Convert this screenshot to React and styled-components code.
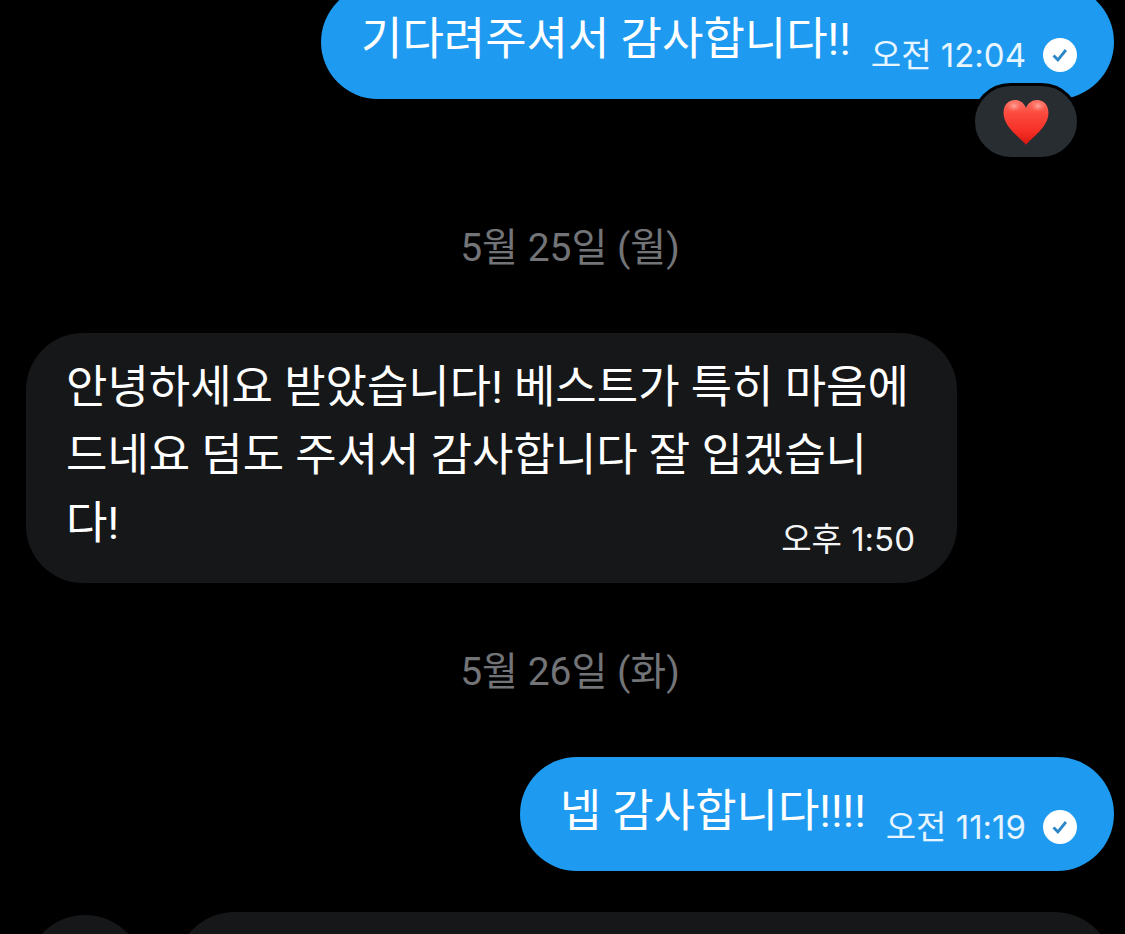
import React from 'react';
import styled, { createGlobalStyle } from 'styled-components';

const GlobalStyle = createGlobalStyle`
  * {
    box-sizing: border-box;
  }

  body {
    margin: 0;
    background: #000;
    font-family: Roboto, "Noto Sans CJK KR", sans-serif;
  }
`;

const Screen = styled.main`
  height: 100vh;
  overflow: hidden;
  padding: 0 11px 0 26px;
`;

// the thread is scrolled, so the first message is cut off at the top
const Thread = styled.div`
  display: flex;
  flex-direction: column;
  margin-top: -15px;
`;

const Message = styled.div`
  position: relative;
  align-self: ${({ $sent }) => ($sent ? 'flex-end' : 'flex-start')};
  max-width: 931px;
  margin-bottom: ${({ $reacted }) => ($reacted ? '60px' : '0')};
`;

const Bubble = styled.div`
  display: flow-root;
  padding: 21px ${({ $sent }) => ($sent ? '37px' : '42px')} 10px 40px;
  border-radius: 57px;
  background: ${({ $sent }) => ($sent ? '#1e9bf0' : '#161719')};
  color: #fff;
  font-size: 45px;
  line-height: 68px;
`;

const Meta = styled.span`
  float: right;
  display: flex;
  align-items: center;
  gap: 17px;
  margin: 15px 0 0 20px;
  font-family: Inter, "Noto Sans CJK KR", sans-serif;
  font-size: 33px;
  color: ${({ $sent }) => ($sent ? '#e6f5ff' : '#f4f5f6')};
`;

const Reaction = styled.button`
  position: absolute;
  right: 34px;
  top: 98px;
  display: flex;
  align-items: center;
  justify-content: center;
  width: 108px;
  height: 77px;
  padding: 0;
  border: 3px solid #000;
  border-radius: 39px;
  background: #272d30;
`;

const DateLabel = styled.time`
  margin: 59px 0 55px;
  text-align: center;
  font-size: 39px;
  line-height: 60px;
  color: #727477;
`;

const Composer = styled.form`
  display: flex;
  align-items: flex-end;
  gap: 31px;
  margin-top: 41px;
`;

const AddButton = styled.button`
  flex: none;
  width: 118px;
  height: 118px;
  border: 0;
  border-radius: 50%;
  background: #161719;
`;

const MessageInput = styled.input`
  flex: 1;
  min-width: 0;
  height: 121px;
  padding: 0 39px;
  border: 0;
  border-radius: 60px;
  background: #161719;
  color: #fff;
  font-size: 45px;
`;

const SentIcon = () => (
  <svg width="34" height="34" viewBox="0 0 34 34" aria-hidden="true">
    <circle cx="17" cy="17" r="17" fill="#fff" />
    <path d="M10.5 17.4l4.4 4.4 8-9.8" fill="none" stroke="#2b86c8" strokeWidth="2.8" />
  </svg>
);

const HeartIcon = () => (
  <svg width="46" height="47" viewBox="0 0 46 47" aria-hidden="true">
    <defs>
      <linearGradient id="heart" x1="0" y1="0" x2="0" y2="1">
        <stop offset="0" stopColor="#ff7466" />
        <stop offset="0.3" stopColor="#fb4a3e" />
        <stop offset="0.7" stopColor="#f62f26" />
        <stop offset="1" stopColor="#d8170f" />
      </linearGradient>
      <radialGradient id="shine">
        <stop offset="0" stopColor="#ffb3a8" stopOpacity="0.9" />
        <stop offset="1" stopColor="#ff7466" stopOpacity="0" />
      </radialGradient>
    </defs>
    <path
      d="M23 47C20 42 4 32 1 19C-1 9 4 2 12 2C17 2 21 5 23 10C25 5 29 2 34 2C42 2 47 9 45 19C42 32 26 42 23 47Z"
      fill="url(#heart)"
    />
    <ellipse cx="11" cy="8" rx="8" ry="6" fill="url(#shine)" />
    <ellipse cx="35" cy="8" rx="8" ry="6" fill="url(#shine)" />
  </svg>
);

const ChatMessage = ({ text, time, sent, reacted }) => (
  <Message $sent={sent} $reacted={reacted}>
    <Bubble $sent={sent}>
      {text}
      <Meta $sent={sent}>
        {time}
        {sent && <SentIcon />}
      </Meta>
    </Bubble>
    {reacted && (
      <Reaction type="button" aria-label="하트">
        <HeartIcon />
      </Reaction>
    )}
  </Message>
);

const App = () => {
  return (
    <>
      <GlobalStyle />
      <Screen>
        <Thread>
          <ChatMessage text="기다려주셔서 감사합니다!!" time="오전 12:04" sent reacted />
          <DateLabel dateTime="2020-05-25">5월 25일 (월)</DateLabel>
          <ChatMessage
            text="안녕하세요 받았습니다! 베스트가 특히 마음에 드네요 덤도 주셔서 감사합니다 잘 입겠습니다!"
            time="오후 1:50"
          />
          <DateLabel dateTime="2020-05-26">5월 26일 (화)</DateLabel>
          <ChatMessage text="넵 감사합니다!!!!" time="오전 11:19" sent />
        </Thread>
        <Composer>
          <AddButton type="button" aria-label="추가" />
          <MessageInput type="text" aria-label="메시지" />
        </Composer>
      </Screen>
    </>
  );
};

export default App;
